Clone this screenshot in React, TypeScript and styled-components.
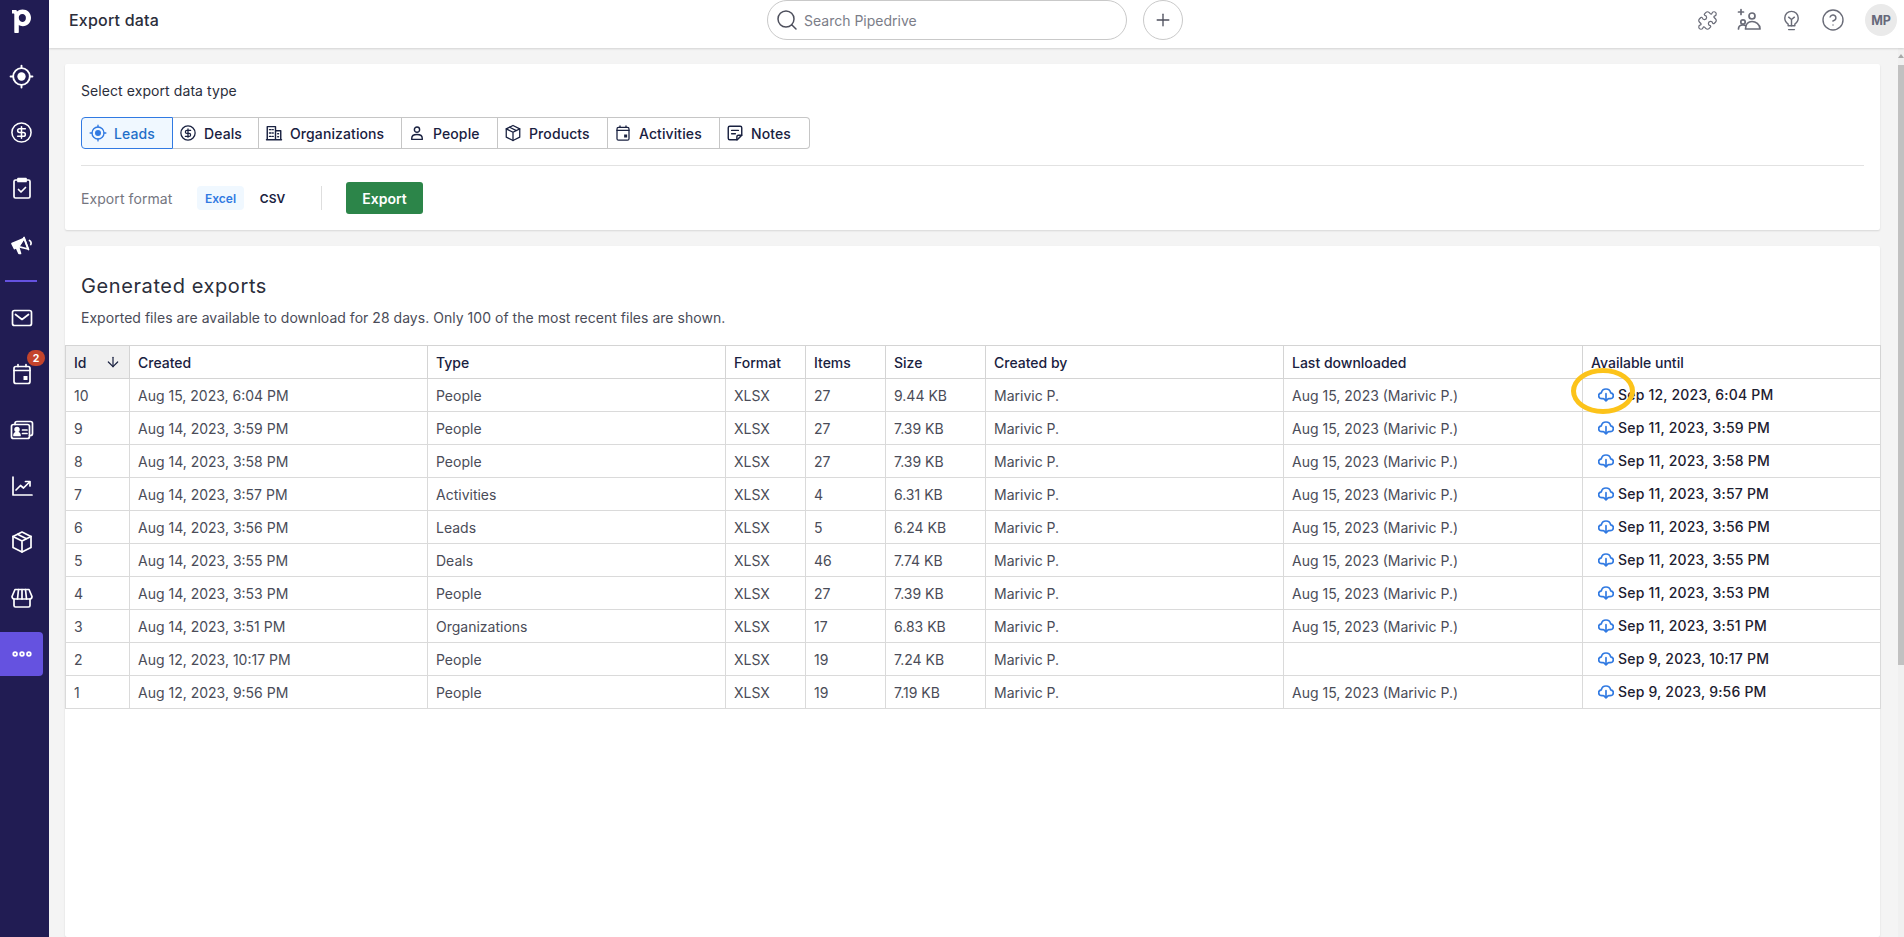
import React from "react";
import styled, { createGlobalStyle } from "styled-components";
import { ArrowDown, CircleDollarSign, CircleHelp, Plus, Puzzle, Search } from "lucide-react";

const Global = createGlobalStyle`
  html, body { margin: 0; padding: 0; height: 100%; overflow: hidden; background: #f4f4f4; }
  body { font-family: Inter, "Noto Sans", "Liberation Sans", sans-serif; color: #192140; }
  #root { height: 937px; }
  * { box-sizing: border-box; }
`;

const Shell = styled.div`
  display: flex;
  height: 937px;
  width: 1904px;
`;

const Sidebar = styled.nav`
  flex: 0 0 49px;
  background: #211c53;
  display: flex;
  flex-direction: column;
  padding-right: 6px;
  gap: 12px;
  color: #fff;
`;

const LogoSlot = styled.div`
  height: 42px;
  display: flex;
  align-items: flex-start;
  justify-content: center;
  padding-top: 8px;
`;

const NavItem = styled.div<{ $active?: boolean }>`
  position: relative;
  height: 44px;
  display: flex;
  align-items: center;
  justify-content: center;
  background: ${(p) => (p.$active ? "#6552e0" : "transparent")};
  border-radius: ${(p) => (p.$active ? "0 4px 4px 0" : "0")};
`;

const NavRule = styled.div`
  height: 2px;
  width: 32px;
  margin: 2px 0 2px 5px;
  background: #6552e0;
`;

const Badge = styled.span`
  position: absolute;
  top: -2px;
  left: 27px;
  width: 18px;
  height: 16px;
  border-radius: 8px;
  background: #c4442c;
  color: #fff;
  font-size: 10.5px;
  font-weight: 700;
  display: flex;
  align-items: center;
  justify-content: center;
`;

const Column = styled.div`
  flex: 1;
  min-width: 0;
  display: flex;
  flex-direction: column;
`;

const Header = styled.header`
  flex: 0 0 48px;
  background: #fff;
  display: flex;
  align-items: flex-start;
  box-shadow: 0 1px 2px rgba(0, 0, 0, 0.14);
  position: relative;
  z-index: 2;
`;

const HeaderTitle = styled.h1`
  flex: 0 0 718px;
  margin: 0;
  padding: 10px 0 0 20px;
  font-size: 16px;
  line-height: 20px;
  font-weight: 500;
  letter-spacing: 0.2px;
  color: #2b2e3b;
`;

const SearchBox = styled.div`
  width: 360px;
  height: 40px;
  border: 1px solid #c9c9c9;
  border-radius: 20px;
  display: flex;
  align-items: center;
  gap: 5px;
  padding-left: 7px;
  color: #7b7d88;
  font-size: 14px;
`;

const AddButton = styled.div`
  width: 40px;
  height: 40px;
  margin-left: 16px;
  border: 1px solid #c9c9c9;
  border-radius: 50%;
  display: flex;
  align-items: center;
  justify-content: center;
  color: #4d4f5c;
`;

const HeaderTools = styled.div`
  flex: 1;
  display: flex;
  align-items: center;
  justify-content: flex-end;
  height: 40px;
  gap: 18px;
  padding-right: 7px;
  color: #6a6c78;
`;

const ToolSlot = styled.span`
  width: 24px;
  height: 24px;
  display: flex;
  align-items: center;
  justify-content: center;
`;

const Avatar = styled.div`
  width: 32px;
  height: 32px;
  margin-left: 2px;
  border-radius: 50%;
  background: #eaeaea;
  color: #66687a;
  font-size: 12.5px;
  font-weight: 700;
  display: flex;
  align-items: center;
  justify-content: center;
`;

const Body = styled.div`
  flex: 1;
  min-height: 0;
  display: flex;
`;

const Content = styled.main`
  flex: 1;
  min-width: 0;
  display: flex;
  flex-direction: column;
  gap: 16px;
  padding: 16px 18px 0 16px;
`;

const Card = styled.section`
  background: #fff;
  box-shadow: 0 1px 2px rgba(0, 0, 0, 0.12);
  border-radius: 2px;
`;

const ExportCard = styled(Card)`
  height: 166px;
  padding: 17px 16px 0;
`;

const SectionLabel = styled.div`
  font-size: 14px;
  line-height: 20px;
  letter-spacing: 0.08px;
  color: #2b2e3b;
`;

const Tabs = styled.div`
  display: inline-flex;
  margin-top: 16px;
  height: 32px;
`;

const Tab = styled.div<{ $w: number; $active?: boolean }>`
  width: ${(p) => p.$w}px;
  display: flex;
  align-items: center;
  gap: 7px;
  padding-left: ${(p) => (p.$active ? 7 : 6)}px;
  font-size: 14px;
  font-weight: 500;
  letter-spacing: 0.1px;
  color: ${(p) => (p.$active ? "#1f6fc9" : "#192140")};
  background: ${(p) => (p.$active ? "#f0f8ff" : "#fff")};
  border: 1px solid ${(p) => (p.$active ? "#317ae2" : "#c6c6c6")};
  border-left-width: ${(p) => (p.$active ? 1 : 0)}px;
  &:first-child { border-radius: 4px 0 0 4px; }
  &:last-child { border-radius: 0 4px 4px 0; }
`;

const Rule = styled.hr`
  border: 0;
  height: 1px;
  background: #e2e2e2;
  margin: 16px 0 0;
`;

const FormatRow = styled.div`
  display: flex;
  align-items: center;
  margin-top: 16px;
  height: 32px;
`;

const FormatLabel = styled.span`
  width: 116px;
  font-size: 14px;
  letter-spacing: 0.08px;
  color: #74767f;
`;

const FormatPill = styled.span<{ $active?: boolean }>`
  width: ${(p) => (p.$active ? 47 : 57)}px;
  height: 24px;
  border-radius: 4px;
  display: flex;
  align-items: center;
  justify-content: center;
  font-size: 12px;
  font-weight: 600;
  color: ${(p) => (p.$active ? "#317ae2" : "#192140")};
  background: ${(p) => (p.$active ? "#f0f8ff" : "transparent")};
`;

const VRule = styled.span`
  width: 1px;
  height: 24px;
  background: #dedede;
  margin: 0 24px 0 20px;
`;

const ExportButton = styled.button`
  width: 77px;
  height: 32px;
  border: 0;
  border-radius: 3px;
  background: #2c8549;
  color: #fff;
  font: 600 14px Inter, sans-serif;
`;

const ExportsCard = styled(Card)`
  flex: 1;
  min-height: 0;
`;

const ExportsHead = styled.div`
  height: 99px;
  padding: 27px 16px 0;
`;

const ExportsTitle = styled.h2`
  margin: 0;
  font-size: 20px;
  line-height: 26px;
  font-weight: 400;
  letter-spacing: 0.6px;
  color: #2b2e3b;
`;

const ExportsNote = styled.p`
  margin: 10px 0 0;
  font-size: 14px;
  line-height: 18px;
  letter-spacing: 0.03px;
  color: #4a4c58;
`;

const Table = styled.table`
  table-layout: fixed;
  width: 1815px;
  border-collapse: collapse;
  font-size: 14px;
`;

const Th = styled.th<{ $w: number; $sorted?: boolean }>`
  width: ${(p) => p.$w}px;
  height: 33px;
  padding: 0 8px;
  text-align: left;
  font-weight: 500;
  color: #192140;
  background: ${(p) => (p.$sorted ? "#f0f0f0" : "#fff")};
  border: 1px solid #d4d4d4;
`;

const SortHead = styled.div`
  display: flex;
  align-items: center;
  justify-content: space-between;
`;

const Td = styled.td`
  height: 33px;
  padding: 0 8px;
  color: #4a4c58;
  border: 1px solid #dadada;
  white-space: nowrap;
  overflow: hidden;
`;

const AvailableCell = styled(Td)`
  overflow: visible;
  position: relative;
  padding-left: 15px;
`;

const Download = styled.div`
  display: flex;
  align-items: center;
  gap: 4px;
  margin-top: -1px;
  color: #1d2030;
  font-weight: 500;
  letter-spacing: 0.2px;
`;

const Ring = styled.span`
  position: absolute;
  left: -12px;
  top: -11px;
  width: 64px;
  height: 46px;
  border: 5px solid #fcc31a;
  border-radius: 50%;
  pointer-events: none;
`;

const ScrollTrack = styled.div`
  flex: 0 0 6px;
  background: #f0f0f0;
  display: flex;
  flex-direction: column;
  align-items: center;
  padding-top: 6px;
`;

const ScrollArrow = styled.span`
  width: 0;
  height: 0;
  border-left: 3px solid transparent;
  border-right: 3px solid transparent;
  border-bottom: 4px solid #a8a8a8;
`;

const ScrollThumb = styled.div`
  width: 6px;
  height: 600px;
  margin-top: 7px;
  background: #c1c1c1;
`;

type IconProps = { size?: number; color?: string };
const Svg: React.FC<IconProps & { children: React.ReactNode }> = ({ size = 24, color = "currentColor", children }) => (
  <svg width={size} height={size} viewBox="0 0 24 24" fill="none" stroke={color} strokeWidth={1.7} strokeLinecap="round" strokeLinejoin="round">
    {children}
  </svg>
);

const Logo = () => (
  <svg width="22" height="26" viewBox="0 0 22 26" fill="#fff">
    <path fillRule="evenodd" d="M1 2h4.400l.6 1.600C7.400 2.200 9.200 1.500 11.500 1.500c4.900 0 8.500 3.500 8.500 8.300s-3.400 8.400-8.200 8.400c-1.700 0-3-.4-4-1.100V24c0 .6-.3 1-1 1H4.300c-.7 0-1-.4-1-1V6.300c0-.5-.2-.7-.7-.7H1V2zm10.300 4.100c-2.400 0-3.500 1.800-3.500 3.700 0 2 1.200 4.100 3.500 4.100 2 0 3.600-1.500 3.600-4 0-2-1.200-3.800-3.600-3.800z" />
  </svg>
);

const LeadsIcon: React.FC<IconProps> = (p) => (
  <Svg {...p}>
    <circle cx="12" cy="12" r="8" strokeWidth={1.8} />
    <circle cx="12" cy="12" r="4" fill={p.color ?? "currentColor"} stroke="none" />
    <path d="M12 1.500v2.500M12 20v2.500M1.500 12H4M20 12h2.500" strokeWidth={1.8} />
  </Svg>
);

const DealsIcon: React.FC<IconProps> = (p) => (
  <Svg {...p}>
    <circle cx="12" cy="12" r="9.500" strokeWidth={1.7} />
    <path d="M15.500 8.500h-5a2 2 0 0 0 0 4h3a2 2 0 0 1 0 4h-5M12 6.500v11" strokeWidth={1.7} />
  </Svg>
);

const ActivitiesIcon: React.FC<IconProps> = (p) => (
  <Svg {...p}>
    <rect x="4" y="4" width="16" height="18" rx="1.500" />
    <path d="M8 2.500h8v3H8z" fill="currentColor" />
    <path d="M8.500 13.500l2.500 2.500 4.500-4.500" />
  </Svg>
);

const CampaignIcon: React.FC<IconProps> = (p) => (
  <Svg {...p}>
    <path d="M2 11.500l2.500 5 4-1.800L14 6.500z" fill="currentColor" />
    <path d="M14 6l-5.500 8.700 9.500 2.300z" />
    <path d="M14 5.500l4.500 12" />
    <path d="M6.500 16l2.500 5.500h1.500l-1.800-6" fill="currentColor" />
    <path d="M19.500 8.500c1.500.7 2 2.500 1.300 4" />
  </Svg>
);

const MailIcon: React.FC<IconProps> = (p) => (
  <Svg {...p}>
    <rect x="2.500" y="4.500" width="19" height="15" rx="2" />
    <path d="M5.500 8.500l6.500 5 6.500-5" />
  </Svg>
);

const CalendarIcon: React.FC<IconProps> = (p) => (
  <Svg {...p}>
    <rect x="4" y="4.500" width="16" height="17" rx="2" />
    <path d="M4 8.500h16M8 2.500v2M16 2.500v2" />
    <rect x="13.500" y="14" width="4" height="4" fill={p.color ?? "currentColor"} stroke="none" />
  </Svg>
);

const ContactsIcon: React.FC<IconProps> = (p) => (
  <Svg {...p}>
    <rect x="1.500" y="6.500" width="18" height="14" rx="2" />
    <path d="M5 6.500V5.500c0-1 .8-2 2-2h13.500c1 0 2 1 2 2v10c0 1-.8 2-2 2h-1" />
    <circle cx="7" cy="11.500" r="1.900" fill="currentColor" />
    <path d="M4 17.500c0-2 1.400-3 3-3s3 1 3 3z" fill="currentColor" />
    <path d="M12.500 12h4.500M12.500 15.500h4.500" />
  </Svg>
);

const InsightsIcon: React.FC<IconProps> = (p) => (
  <Svg {...p}>
    <path d="M3 3v18h19" />
    <path d="M6 16l4.500-4.500 3 2.500 6-6" />
    <path d="M15.500 7.500h4.500v4.500" />
  </Svg>
);

const BoxIcon: React.FC<IconProps> = (p) => (
  <Svg {...p}>
    <path d="M12 2l9 4.500v11L12 22l-9-4.500v-11z" />
    <path d="M3 6.500l9 4.500 9-4.500M12 11v11M7.500 4.300l9 4.500" />
  </Svg>
);

const StoreIcon: React.FC<IconProps> = (p) => (
  <Svg {...p}>
    <path d="M5 3.500h14l3 7c0 1.500-1 2.500-2.500 2.500H4.500C3 13 2 12 2 10.500z" />
    <path d="M8.500 3.500L7.500 13M12 3.500V13M15.500 3.500l1 9.500" />
    <path d="M4 13v6.500c0 .8.700 1.500 1.500 1.500h13c.8 0 1.500-.7 1.500-1.500V13" />
  </Svg>
);

const MoreIcon: React.FC<IconProps> = (p) => (
  <Svg {...p}>
    <circle cx="4.500" cy="12" r="2" strokeWidth={2} />
    <circle cx="12" cy="12" r="2" strokeWidth={2} />
    <circle cx="19.500" cy="12" r="2" strokeWidth={2} />
  </Svg>
);

const BuildingIcon: React.FC<IconProps> = (p) => (
  <Svg {...p}>
    <path d="M3 21V3.500h11V21zM14 9h7v12h-7M2 21h20" strokeWidth={1.9} />
    <path d="M6 7.500h2M10 7.500h1M6 12h2M10 12h1M6 16.500h2M10 16.500h1M17 13h1M17 17h1" strokeWidth={1.9} />
  </Svg>
);

const PersonIcon: React.FC<IconProps> = (p) => (
  <Svg {...p}>
    <circle cx="12" cy="7.500" r="3.500" strokeWidth={1.9} />
    <path d="M5 20.500v-1.500c0-3 3-5 7-5s7 2 7 5v1.500z" strokeWidth={1.9} />
  </Svg>
);

const NoteIcon: React.FC<IconProps> = (p) => (
  <Svg {...p}>
    <path d="M5 3h14c1 0 2 1 2 2v10l-6 6H5c-1 0-2-1-2-2V5c0-1 1-2 2-2z" strokeWidth={1.9} />
    <path d="M14.500 21v-4c0-1.300.7-2 2-2H21M7.500 8.500h9M7.500 13h5" strokeWidth={1.9} />
  </Svg>
);

const AddPeopleIcon: React.FC<IconProps> = (p) => (
  <Svg {...p}>
    <path d="M4 1.500v5M1.500 4h5" />
    <circle cx="15" cy="8" r="3" />
    <circle cx="6" cy="14" r="2.200" />
    <path d="M8.500 21c0-5 3-7.500 6.500-7.500s8 2.500 8 7.500z" />
    <path d="M1.500 21c0-2.500 2-4 4.500-4 1 0 2 .2 2.800.7" />
  </Svg>
);

const BulbIcon: React.FC<IconProps> = (p) => (
  <Svg {...p}>
    <path d="M8.500 17.500v-1.800C6.500 14.500 5 12.300 5 9.500 5 5.500 8 2.500 12 2.500s7 3 7 7c0 2.800-1.500 5-3.500 6.200v1.800z" strokeWidth={1.5} />
    <path d="M9 21.500h6M12 17.500v-6.500M9 8.500l3 2.500 3-2.500" strokeWidth={1.5} />
  </Svg>
);

const CloudDownloadIcon: React.FC<IconProps> = (p) => (
  <Svg {...p} color="#317ae2">
    <path d="M7 17.500H6c-3 0-5-2-5-4.500 0-2.300 1.700-4 4-4.300C5.700 5.500 8.500 3 12 3s6.300 2.500 7 5.700c2.300.3 4 2 4 4.300 0 2.500-2 4.500-5 4.500h-1" strokeWidth={2.500} />
    <path d="M12 10v11M8.500 17.500L12 21l3.500-3.500" strokeWidth={2.500} />
  </Svg>
);

const TABS = [
  { label: "Leads", w: 92, Icon: LeadsIcon, active: true },
  { label: "Deals", w: 86, Icon: DealsIcon },
  { label: "Organizations", w: 143, Icon: BuildingIcon },
  { label: "People", w: 96, Icon: PersonIcon },
  { label: "Products", w: 110, Icon: BoxIcon },
  { label: "Activities", w: 112, Icon: CalendarIcon },
  { label: "Notes", w: 90, Icon: NoteIcon },
];

const COLUMNS = [
  { label: "Created", w: 298 },
  { label: "Type", w: 298 },
  { label: "Format", w: 80 },
  { label: "Items", w: 80 },
  { label: "Size", w: 100 },
  { label: "Created by", w: 298 },
  { label: "Last downloaded", w: 299 },
  { label: "Available until", w: 298 },
];

const M = "Marivic P.";
const L = "Aug 15, 2023 (Marivic P.)";
const ROWS = [
  ["10", "Aug 15, 2023, 6:04 PM", "People", "27", "9.44 KB", L, "Sep 12, 2023, 6:04 PM"],
  ["9", "Aug 14, 2023, 3:59 PM", "People", "27", "7.39 KB", L, "Sep 11, 2023, 3:59 PM"],
  ["8", "Aug 14, 2023, 3:58 PM", "People", "27", "7.39 KB", L, "Sep 11, 2023, 3:58 PM"],
  ["7", "Aug 14, 2023, 3:57 PM", "Activities", "4", "6.31 KB", L, "Sep 11, 2023, 3:57 PM"],
  ["6", "Aug 14, 2023, 3:56 PM", "Leads", "5", "6.24 KB", L, "Sep 11, 2023, 3:56 PM"],
  ["5", "Aug 14, 2023, 3:55 PM", "Deals", "46", "7.74 KB", L, "Sep 11, 2023, 3:55 PM"],
  ["4", "Aug 14, 2023, 3:53 PM", "People", "27", "7.39 KB", L, "Sep 11, 2023, 3:53 PM"],
  ["3", "Aug 14, 2023, 3:51 PM", "Organizations", "17", "6.83 KB", L, "Sep 11, 2023, 3:51 PM"],
  ["2", "Aug 12, 2023, 10:17 PM", "People", "19", "7.24 KB", "", "Sep 9, 2023, 10:17 PM"],
  ["1", "Aug 12, 2023, 9:56 PM", "People", "19", "7.19 KB", L, "Sep 9, 2023, 9:56 PM"],
];

export default function App() {
  return (
    <Shell>
      <Global />
      <Sidebar>
        <LogoSlot><Logo /></LogoSlot>
        <NavItem><LeadsIcon size={25} /></NavItem>
        <NavItem><CircleDollarSign size={23} strokeWidth={1.6} /></NavItem>
        <NavItem><ActivitiesIcon /></NavItem>
        <NavItem><CampaignIcon /></NavItem>
        <NavRule />
        <NavItem><MailIcon /></NavItem>
        <NavItem><CalendarIcon /><Badge>2</Badge></NavItem>
        <NavItem><ContactsIcon /></NavItem>
        <NavItem><InsightsIcon /></NavItem>
        <NavItem><BoxIcon /></NavItem>
        <NavItem><StoreIcon /></NavItem>
        <NavItem $active><MoreIcon size={22} /></NavItem>
      </Sidebar>
      <Column>
        <Header>
          <HeaderTitle>Export data</HeaderTitle>
          <SearchBox><Search size={24} strokeWidth={1.5} color="#4d4f5c" />Search Pipedrive</SearchBox>
          <AddButton><Plus size={20} strokeWidth={1.6} /></AddButton>
          <HeaderTools>
            <ToolSlot><Puzzle size={21} strokeWidth={1.4} /></ToolSlot>
            <ToolSlot><AddPeopleIcon size={24} /></ToolSlot>
            <ToolSlot><BulbIcon size={23} /></ToolSlot>
            <ToolSlot><CircleHelp size={24} strokeWidth={1.4} /></ToolSlot>
            <Avatar>MP</Avatar>
          </HeaderTools>
        </Header>
        <Body>
          <Content>
            <ExportCard>
              <SectionLabel>Select export data type</SectionLabel>
              <Tabs>
                {TABS.map(({ label, w, Icon, active }) => (
                  <Tab key={label} $w={w} $active={active}>
                    <Icon size={18} color={active ? "#317ae2" : "currentColor"} />
                    {label}
                  </Tab>
                ))}
              </Tabs>
              <Rule />
              <FormatRow>
                <FormatLabel>Export format</FormatLabel>
                <FormatPill $active>Excel</FormatPill>
                <FormatPill>CSV</FormatPill>
                <VRule />
                <ExportButton>Export</ExportButton>
              </FormatRow>
            </ExportCard>
            <ExportsCard>
              <ExportsHead>
                <ExportsTitle>Generated exports</ExportsTitle>
                <ExportsNote>Exported files are available to download for 28 days. Only 100 of the most recent files are shown.</ExportsNote>
              </ExportsHead>
              <Table>
                <thead>
                  <tr>
                    <Th $w={64} $sorted>
                      <SortHead>Id<ArrowDown size={16} strokeWidth={1.8} /></SortHead>
                    </Th>
                    {COLUMNS.map((c) => <Th key={c.label} $w={c.w}>{c.label}</Th>)}
                  </tr>
                </thead>
                <tbody>
                  {ROWS.map((r, i) => (
                    <tr key={r[0]}>
                      <Td>{r[0]}</Td>
                      <Td>{r[1]}</Td>
                      <Td>{r[2]}</Td>
                      <Td>XLSX</Td>
                      <Td>{r[3]}</Td>
                      <Td>{r[4]}</Td>
                      <Td>{M}</Td>
                      <Td>{r[5]}</Td>
                      <AvailableCell>
                        <Download><CloudDownloadIcon size={16} />{r[6]}</Download>
                        {i === 0 && <Ring />}
                      </AvailableCell>
                    </tr>
                  ))}
                </tbody>
              </Table>
            </ExportsCard>
          </Content>
          <ScrollTrack><ScrollArrow /><ScrollThumb /></ScrollTrack>
        </Body>
      </Column>
    </Shell>
  );
}
